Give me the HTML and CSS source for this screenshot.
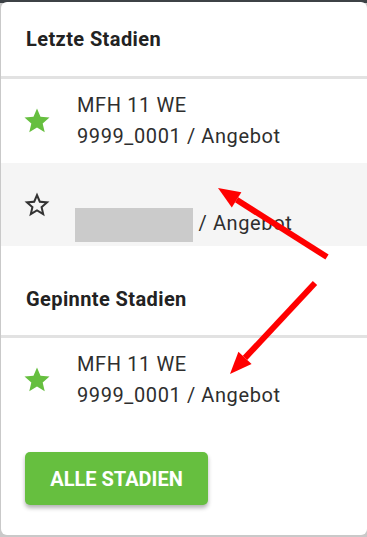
FILE: index.html
```html
<!DOCTYPE html>
<html lang="de">
<head>
<meta charset="utf-8">
<title>Stadien</title>
<link rel="stylesheet" href="styles.css">
</head>
<body>
<div class="card">
  <div class="section-head">Letzte Stadien</div>
  <div class="item">
    <svg class="star filled" viewBox="0 0 24 24"><path d="M12 17.27L18.18 21l-1.64-7.03L22 9.24l-7.19-.61L12 2 9.19 8.63 2 9.24l5.46 4.73L5.82 21z"/></svg>
    <div class="text">
      <div class="line">MFH 11 WE</div>
      <div class="line">9999_0001 / Angebot</div>
    </div>
  </div>
  <div class="item item-hover">
    <svg class="star outline" viewBox="0 0 24 24"><path d="M22 9.24l-7.19-.62L12 2 9.19 8.63 2 9.24l5.46 4.73L5.82 21 12 17.27 18.18 21l-1.63-7.03L22 9.24zM12 15.4l-3.76 2.27 1-4.28-3.32-2.88 4.38-.38L12 6.1l1.71 4.04 4.38.38-3.32 2.88 1 4.28L12 15.4z"/></svg>
    <div class="text">
      <div class="line"></div>
      <div class="line"><span class="redact"></span> / Angebot</div>
    </div>
  </div>
  <div class="section-head second">Gepinnte Stadien</div>
  <div class="item">
    <svg class="star filled" viewBox="0 0 24 24"><path d="M12 17.27L18.18 21l-1.64-7.03L22 9.24l-7.19-.61L12 2 9.19 8.63 2 9.24l5.46 4.73L5.82 21z"/></svg>
    <div class="text">
      <div class="line">MFH 11 WE</div>
      <div class="line">9999_0001 / Angebot</div>
    </div>
  </div>
  <div class="actions">
    <button class="btn">Alle Stadien</button>
  </div>
</div>
<svg class="arrows" viewBox="0 0 367 537" width="367" height="537">
  <line x1="327" y1="257" x2="236.6" y2="199.8" />
  <polygon points="218,188 241.4,192.2 231.8,207.4" />
  <line x1="315" y1="283" x2="245" y2="357.9" />
  <polygon points="230,374 238.4,351.8 251.6,364" />
</svg>
</body>
</html>
```
FILE: styles.css
```css
html, body {
  margin: 0;
  padding: 0;
}
body {
  width: 367px;
  height: 537px;
  overflow: hidden;
  background: linear-gradient(#3d4246 0, #3d4246 3px, #c9c9c9 3px);
  font-family: Roboto, "Noto Sans", Arial, sans-serif;
  position: relative;
}
.card {
  margin: 2px 0 0 1px;
  width: 366px;
  height: 533px;
  background: #fff;
  border-radius: 6px;
  box-sizing: border-box;
}
.section-head {
  height: 77px;
  box-sizing: border-box;
  padding: 25px 25px 0;
  font-size: 20px;
  line-height: 24px;
  font-weight: 700;
  color: #222;
  border-bottom: 3px solid #e2e2e2;
  letter-spacing: 0.4px;
}
.section-head.second {
  height: 92px;
  padding-top: 41px;
}
.item {
  display: flex;
  align-items: center;
  height: 84px;
  padding-left: 21px;
  gap: 25px;
}
.item-hover {
  background: #f5f5f5;
  height: 83px;
}
.star {
  width: 30px;
  height: 30px;
  flex: none;
}
.star.filled { fill: #66bf3f; }
.star.outline { fill: #333; }
.text {
  font-size: 20px;
  line-height: 31px;
  color: #2e2e2e;
  letter-spacing: 0.6px;
}
.line {
  height: 31px;
  white-space: nowrap;
}
.item-hover .text {
  padding-top: 6px;
}
.redact {
  display: inline-block;
  width: 118px;
  height: 34px;
  background: #cbcbcb;
  vertical-align: -12px;
  margin-left: -2px;
}
.actions {
  padding: 30px 0 0 24px;
}
.btn {
  width: 183px;
  height: 53px;
  border: none;
  border-radius: 5px;
  background: #66bf3f;
  color: #fff;
  font-family: Roboto, Arial, sans-serif;
  font-size: 20px;
  font-weight: 700;
  text-transform: uppercase;
  box-shadow: 0 3px 4px rgba(0, 0, 0, 0.3);
  padding: 0;
}
.arrows {
  position: absolute;
  left: 0;
  top: 0;
  pointer-events: none;
}
.arrows line {
  stroke: #ff0000;
  stroke-width: 6;
}
.arrows polygon {
  fill: #ff0000;
}
```
